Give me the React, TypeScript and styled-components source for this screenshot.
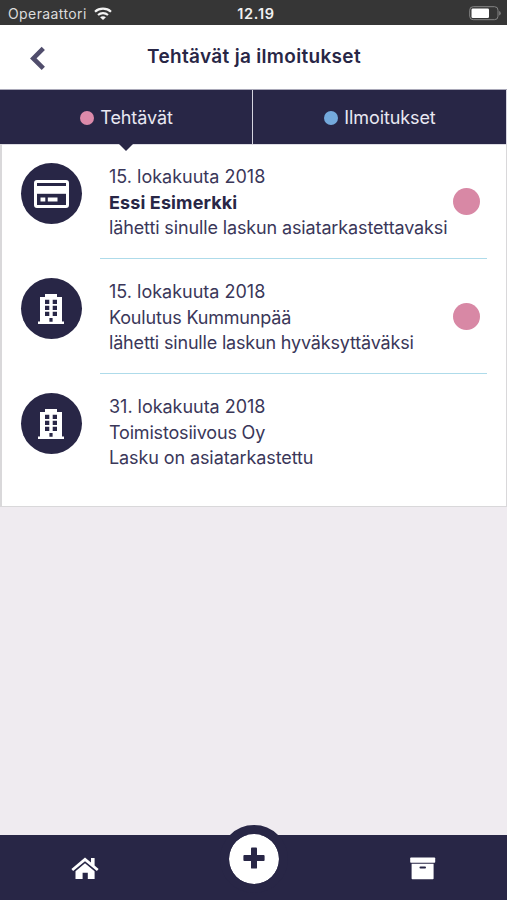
import React from "react";
import styled, { createGlobalStyle } from "styled-components";

const navy = "#282646";
const ink = "#3a3759";

const GlobalStyle = createGlobalStyle`
  * { box-sizing: border-box; }
  body { margin: 0; background: #efebf0; font-family: Inter, "Liberation Sans", sans-serif; color: ${ink}; }
`;

const Screen = styled.div`
  width: 507px;
  height: 900px;
  display: flex;
  flex-direction: column;
  overflow: hidden;
`;

const StatusBar = styled.div`
  height: 25px;
  flex: none;
  display: grid;
  grid-template-columns: 1fr auto 1fr;
  align-items: center;
  padding: 2px 6px 0 8px;
  background: #363636;
  color: #f1f1f1;
`;

const Carrier = styled.div`
  display: flex;
  align-items: center;
  gap: 7px;
  font-size: 14px;
  letter-spacing: 0.4px;
  color: #dcdcdc;
`;

const Clock = styled.div`
  padding-left: 3px;
  font-size: 14.5px;
  font-weight: 600;
  letter-spacing: 0.7px;
`;

const BatterySlot = styled.div`
  display: flex;
  justify-content: flex-end;
`;

const Header = styled.header`
  height: 64px;
  flex: none;
  display: grid;
  grid-template-columns: 76px 1fr 75px;
  align-items: center;
  background: #fff;
`;

const BackButton = styled.button`
  display: flex;
  justify-content: center;
  border: 0;
  padding: 2px 0 0;
  background: none;
`;

const Title = styled.h1`
  margin: 0;
  text-align: center;
  font-size: 19px;
  line-height: 24px;
  font-weight: 600;
  letter-spacing: 0.32px;
  color: ${navy};
  white-space: nowrap;
`;

const Tabs = styled.nav`
  flex: none;
  height: 55px;
  display: grid;
  grid-template-columns: 252px 1fr;
  column-gap: 1px;
  padding-right: 1px;
  border-top: 1px solid #a9a8b8;
  background: #d5d4df;
`;

const Tab = styled.button<{ $active?: boolean }>`
  position: relative;
  display: flex;
  align-items: center;
  justify-content: center;
  gap: 6px;
  padding: 1px 0 0 1px;
  border: 0;
  background: ${navy};
  color: #e9e8f2;
  font: 400 18px Inter, sans-serif;
  letter-spacing: -0.1px;

  &::after {
    content: "";
    display: ${({ $active }) => ($active ? "block" : "none")};
    position: absolute;
    top: 100%;
    left: 50%;
    margin-left: -7px;
    border: 7px solid transparent;
    border-top-color: ${navy};
    border-bottom: 0;
  }
`;

const Dot = styled.span<{ $size: number; $color: string }>`
  flex: none;
  width: ${({ $size }) => $size}px;
  height: ${({ $size }) => $size}px;
  border-radius: 50%;
  background: ${({ $color }) => $color};
`;

const List = styled.main`
  flex: none;
  height: 363px;
  background: #fff;
  border: solid #d9d8da;
  border-width: 0 1px 1px 2px;
  box-shadow: inset 0 1px #dddce3;
`;

const Row = styled.article`
  height: 115px;
  display: grid;
  grid-template-columns: 98px 387px;
`;

const Badge = styled.div`
  width: 61px;
  height: 61px;
  margin: 19px 0 0 18.5px;
  display: grid;
  place-items: center;
  border-radius: 50%;
  background: ${navy};
`;

const Body = styled.div<{ $divided?: boolean }>`
  display: flex;
  align-items: flex-start;
  justify-content: space-between;
  padding: 20px 7px 0 9px;
  border-bottom: ${({ $divided }) => ($divided ? "1px solid #aedbea" : "0")};
`;

const Lines = styled.div`
  display: flex;
  flex-direction: column;
`;

const Line = styled.span<{ $bold?: boolean; $spacing?: number }>`
  font-size: 18px;
  line-height: 25.7px;
  white-space: nowrap;
  font-weight: ${({ $bold }) => ($bold ? 700 : 400)};
  color: ${({ $bold }) => ($bold ? navy : ink)};
  letter-spacing: ${({ $spacing = 0 }) => $spacing}px;
`;

const DotSlot = styled.div`
  margin-top: 24px;
`;

const Spacer = styled.div`
  flex: 1;
`;

const BottomBar = styled.footer`
  flex: none;
  height: 65px;
  display: grid;
  grid-template-columns: 1fr 1fr 1fr;
  justify-items: center;
  background: ${navy};
`;

const BarItem = styled.button`
  display: flex;
  align-items: flex-start;
  padding: 22px 0 0;
  border: 0;
  background: none;
`;

const AddButton = styled.button`
  display: grid;
  place-items: center;
  width: 68px;
  height: 68px;
  margin-top: -10px;
  padding: 0 0 2px;
  border: 9px solid ${navy};
  border-radius: 50%;
  background: #fff;
  background-clip: padding-box;
`;

const Wifi = () => (
  <svg width="18" height="14" viewBox="0 0 18 14" fill="none" stroke="#f4f4f4">
    <path d="M1 4.7C5.4.7 12.6.7 17 4.7" strokeWidth="2.2" />
    <path d="M4 8C6.8 5.5 11.2 5.5 14 8" strokeWidth="2.1" />
    <path d="M6.1 10.2C7.8 8.8 10.2 8.8 11.9 10.2L9 13Z" fill="#f4f4f4" stroke="none" />
  </svg>
);

const Battery = () => (
  <svg width="32" height="15" viewBox="0 0 32 15">
    <rect x=".7" y=".7" width="28.3" height="13" rx="3.5" fill="none" stroke="#858585" />
    <rect x="2.5" y="2.5" width="17.5" height="9.5" rx="1.3" fill="#fff" />
    <path d="M30.2 5v4.6q1.5-.6 1.5-2.3T30.2 5Z" fill="#858585" />
  </svg>
);

const Chevron = () => (
  <svg width="16" height="25" viewBox="0 0 16 25">
    <path d="M13.3 2.4 3.3 12.4 13.3 22.4" fill="none" stroke="#504d6c" strokeWidth="4.6" />
  </svg>
);

const CardIcon = () => (
  <svg width="35" height="28" viewBox="0 0 35 28">
    <rect x="1.5" y="1.5" width="32" height="25" rx="1.5" fill={navy} stroke="#fff" strokeWidth="3" />
    <path d="M2.5 6H32.5V13.8H2.5Z" fill="#fff" />
    <path d="M6.5 17.5h4.8v4H6.5zM13.8 17.5h9.7v4H13.8z" fill="#fff" />
  </svg>
);

const BuildingIcon = () => (
  <svg width="26" height="32" viewBox="0 0 26 32">
    <path
      fill="#fff"
      fillRule="evenodd"
      d="M7 1H19V4H24V28.5H26V31H0V28.5H2V4H7ZM7 6.8V11H11.3V6.8ZM14.7 6.8V11H19V6.8ZM7 12.8V17H11.3V12.8ZM14.7 12.8V17H19V12.8ZM7 18.8V23H11.3V18.8ZM14.7 18.8V23H19V18.8ZM11.4 25V28.8H14.6V25Z"
    />
  </svg>
);

const HomeIcon = () => (
  <svg width="28" height="24" viewBox="0 0 28 24" fill="#fff">
    <path d="M14 .5 20 5.5V1H23.6V8.5L27.6 12 25.9 14.1 14 4.3 2.1 14.1.4 12Z" />
    <path d="m14 6.2 9.6 8V22H16.8V15.8h-5.2V22H4.5v-7.8Z" />
  </svg>
);

const ArchiveIcon = () => (
  <svg width="26" height="23" viewBox="0 0 26 23">
    <rect x=".2" y=".5" width="25" height="5.2" rx=".8" fill="#fff" />
    <path d="M1.6 6.7H23.6V21.4Q23.6 22.2 22.8 22.2H2.4Q1.6 22.2 1.6 21.4Z" fill="#fff" />
    <rect x="9.5" y="9.5" width="6.5" height="1.9" rx=".95" fill={navy} />
  </svg>
);

const PlusIcon = () => (
  <svg width="22" height="22" viewBox="0 0 22 22" fill={navy}>
    <rect x="8" y=".4" width="6" height="21.2" rx=".9" />
    <rect x=".4" y="8" width="21.2" height="6" rx=".9" />
  </svg>
);

const tasks = [
  {
    icon: <CardIcon />,
    unread: true,
    lines: [
      { text: "15. lokakuuta 2018", spacing: 0 },
      { text: "Essi Esimerkki", bold: true, spacing: 0.12 },
      { text: "lähetti sinulle laskun asiatarkastettavaksi", spacing: -0.13 },
    ],
  },
  {
    icon: <BuildingIcon />,
    unread: true,
    lines: [
      { text: "15. lokakuuta 2018", spacing: 0 },
      { text: "Koulutus Kummunpää", spacing: -0.17 },
      { text: "lähetti sinulle laskun hyväksyttäväksi", spacing: -0.18 },
    ],
  },
  {
    icon: <BuildingIcon />,
    unread: false,
    lines: [
      { text: "31. lokakuuta 2018", spacing: -0.03 },
      { text: "Toimistosiivous Oy", spacing: -0.18 },
      { text: "Lasku on asiatarkastettu", spacing: -0.1 },
    ],
  },
];

export default function App() {
  return (
    <Screen>
      <GlobalStyle />
      <StatusBar>
        <Carrier>
          Operaattori
          <Wifi />
        </Carrier>
        <Clock>12.19</Clock>
        <BatterySlot>
          <Battery />
        </BatterySlot>
      </StatusBar>
      <Header>
        <BackButton aria-label="Takaisin">
          <Chevron />
        </BackButton>
        <Title>Tehtävät ja ilmoitukset</Title>
      </Header>
      <Tabs>
        <Tab $active>
          <Dot $size={14} $color="#dc8aaa" />
          Tehtävät
        </Tab>
        <Tab>
          <Dot $size={14} $color="#74a9dc" />
          Ilmoitukset
        </Tab>
      </Tabs>
      <List>
        {tasks.map((task, i) => (
          <Row key={i}>
            <Badge>{task.icon}</Badge>
            <Body $divided={i < tasks.length - 1}>
              <Lines>
                {task.lines.map((line) => (
                  <Line key={line.text} $bold={line.bold} $spacing={line.spacing}>
                    {line.text}
                  </Line>
                ))}
              </Lines>
              {task.unread && (
                <DotSlot>
                  <Dot as="div" $size={27} $color="#d888a5" />
                </DotSlot>
              )}
            </Body>
          </Row>
        ))}
      </List>
      <Spacer />
      <BottomBar>
        <BarItem aria-label="Koti">
          <HomeIcon />
        </BarItem>
        <AddButton aria-label="Lisää">
          <PlusIcon />
        </AddButton>
        <BarItem aria-label="Arkisto">
          <ArchiveIcon />
        </BarItem>
      </BottomBar>
    </Screen>
  );
}
